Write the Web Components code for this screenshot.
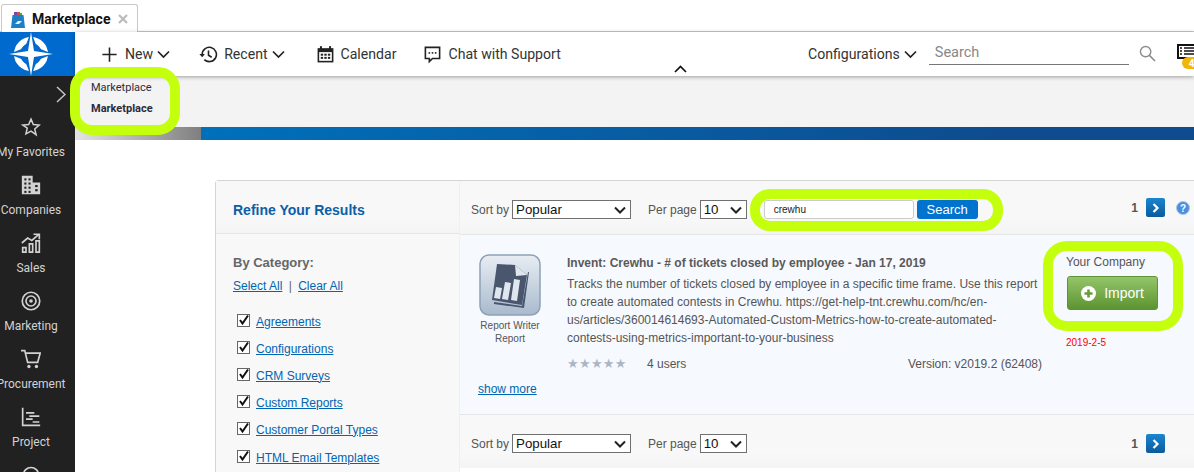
<!DOCTYPE html>
<html>
<head>
<meta charset="utf-8">
<title>Marketplace</title>
<style>
html, body { margin: 0; padding: 0; background: white; overflow: hidden; }
body { width: 1194px; height: 472px; font-family: 'Liberation Sans', Arial, sans-serif; }
</style>
</head>
<body>
<app-shell></app-shell>
<script>
const ICONS = {
    star: '<path d="M12 2.600l2.800 6.500 7 .6-5.300 4.600 1.600 6.900L12 17l-6.100 3.200 1.600-6.900L2.200 9.700l7-.6z" fill="none" stroke="currentColor" stroke-width="1.800"/>',
    companies: '<path d="M1 1h13v22H1zM14 9h9v14h-9z" fill="currentColor"/><g fill="#212121"><rect x="4" y="4" width="2.500" height="2.500"/><rect x="9" y="4" width="2.500" height="2.500"/><rect x="4" y="9" width="2.500" height="2.500"/><rect x="9" y="9" width="2.500" height="2.500"/><rect x="4" y="14" width="2.500" height="2.500"/><rect x="9" y="14" width="2.500" height="2.500"/><rect x="4" y="19" width="2.500" height="2.500"/><rect x="9" y="19" width="2.500" height="2.500"/><rect x="17" y="12" width="3" height="2.500"/><rect x="17" y="17" width="3" height="2.500"/></g>',
    sales: '<path d="M1 12l7-6 5 3 8-7M15 1.500h7v6" fill="none" stroke="currentColor" stroke-width="2"/><path d="M2 17.500h4v5.500H2zM10 13h4v10h-4zM18 9.500h4V23h-4z" fill="none" stroke="currentColor" stroke-width="2"/>',
    marketing: '<circle cx="12" cy="12" r="10.500" fill="none" stroke="currentColor" stroke-width="2"/><circle cx="12" cy="12" r="6" fill="none" stroke="currentColor" stroke-width="2"/><circle cx="12" cy="12" r="2.200" fill="currentColor"/>',
    cart: '<path d="M0 2h4.500l3.500 14h12L23 5H5.500" fill="none" stroke="currentColor" stroke-width="2"/><circle cx="9.500" cy="21" r="2" fill="currentColor"/><circle cx="18.500" cy="21" r="2" fill="currentColor"/>',
    project: '<path d="M2 1v21h21" fill="none" stroke="currentColor" stroke-width="2"/><path d="M6 7h10M10 11h12M6 14.500h8M14 18h8" fill="none" stroke="currentColor" stroke-width="2"/>',
    search: '<circle cx="12" cy="12" r="9" fill="none" stroke="currentColor" stroke-width="2"/><path d="M18 18l5 5" stroke="currentColor" stroke-width="2"/>',
    plus: '<path d="M12 3v18M3 12h18" stroke="currentColor" stroke-width="2" fill="none"/>',
    history: '<path d="M4 12a9 9 0 1 1 2.700 6.400" fill="none" stroke="currentColor" stroke-width="2"/><path d="M0.500 11.500h7L4 15.500z" fill="currentColor"/><path d="M12 7v6l4 2.500" fill="none" stroke="currentColor" stroke-width="2"/>',
    calendar: '<path d="M2 4h20v18H2z" fill="currentColor"/><rect x="5" y="1.500" width="2.500" height="4" fill="currentColor"/><rect x="16.500" y="1.500" width="2.500" height="4" fill="currentColor"/><rect x="4" y="9" width="16" height="11" fill="#fff"/><g fill="currentColor"><rect x="6" y="11" width="3" height="2.500"/><rect x="10.500" y="11" width="3" height="2.500"/><rect x="15" y="11" width="3" height="2.500"/><rect x="6" y="15" width="3" height="2.500"/><rect x="10.500" y="15" width="3" height="2.500"/><rect x="15" y="15" width="3" height="2.500"/></g>',
    chat: '<path d="M3 3h18v14H12l-4 4v-4H3z" fill="none" stroke="currentColor" stroke-width="2"/><g fill="currentColor"><rect x="7" y="9" width="2" height="2"/><rect x="11" y="9" width="2" height="2"/><rect x="15" y="9" width="2" height="2"/></g>'
};

function chevron(dir) {
    const d = dir === 'up' ? 'M1 7l5.500-5.500L12 7' : 'M1 1.500L6.500 7 12 1.500';
    return `<svg width="13" height="9" viewBox="0 0 13 9"><path d="${d}" fill="none" stroke="currentColor" stroke-width="1.700"/></svg>`;
}

class TabStrip extends HTMLElement {
    constructor() {
        super();
        this.attachShadow({ mode: 'open' }).innerHTML = `
            <style>
            :host { display: flex; height: 32px; box-sizing: border-box; border-bottom: 1px solid #c8c8c8; padding: 4px 0 0 1px; background: #fff; }
            .tab { display: flex; align-items: center; width: 137px; height: 28px; box-sizing: border-box; border: 1px solid #c8c8c8; border-bottom: 0; border-radius: 3px 3px 0 0; padding-left: 9px; background: #fff; }
            svg { display: block; }
            .bag { margin-top: 2px; }
            .label { font: bold 14px Roboto, sans-serif; color: #111; margin-left: 7px; }
            .x { margin-left: 8px; }
            </style>
            <div class="tab">
                <svg class="bag" width="14" height="16" viewBox="0 0 14 16">
                    <rect x="3" y="0" width="3" height="4" fill="#7a4aa0"/>
                    <rect x="6" y="0" width="3" height="4" fill="#d84a4a"/>
                    <rect x="9" y="1" width="2" height="3" fill="#3fae49"/>
                    <path d="M1.500 3h11L14 16H0z" fill="#1f7fc4"/>
                    <path d="M4 12l3-3 4 0-3 3z" fill="#e8f3fb"/>
                </svg>
                <span class="label">Marketplace</span>
                <svg class="x" width="10" height="10" viewBox="0 0 10 10"><path d="M1 1l8 8M9 1l-8 8" stroke="#bbb" stroke-width="2.200"/></svg>
            </div>
        `;
    }
}

class NavItem extends HTMLElement {
    constructor() {
        super();
        const icon = ICONS[this.getAttribute('icon')];
        this.attachShadow({ mode: 'open' }).innerHTML = `
            <style>
            :host { display: flex; flex-direction: column; align-items: center; height: 58px; width: 62px; color: #d2d2d2; }
            svg { display: block; width: 20px; height: 20px; flex: none; }
            .label { font: 12px/16px Roboto, sans-serif; margin-top: 7px; white-space: nowrap; }
            </style>
            <svg viewBox="0 0 24 24">${icon}</svg>
            <span class="label"><slot></slot></span>
        `;
    }
}

class SideNav extends HTMLElement {
    constructor() {
        super();
        this.attachShadow({ mode: 'open' }).innerHTML = `
            <style>
            :host { display: block; width: 75px; flex: none; background: #212121; overflow: hidden; }
            .logo { height: 44px; background: #006ace; padding-left: 9px; display: flex; align-items: center; }
            .toggle { height: 36px; display: flex; justify-content: flex-end; align-items: center; padding-right: 9px; }
            .list { display: flex; flex-direction: column; margin-top: 5px; }
            </style>
            <div class="logo">
                <svg width="44" height="44" viewBox="0 0 44 44">
                    <circle cx="22" cy="22" r="14" fill="none" stroke="#fff" stroke-width="6"/>
                    <path d="M22 8L26 18 36 22 26 26 22 36 18 26 8 22 18 18z" fill="#006ace" stroke="#006ace" stroke-width="6"/>
                    <path d="M22 0l3 19 19 3-19 3-3 19-3-19-19-3 19-3z" fill="#fff"/>
                </svg>
            </div>
            <div class="toggle">
                <svg width="10" height="17" viewBox="0 0 10 17"><path d="M1 1l8 7.500-8 7.500" fill="none" stroke="#c8c8c8" stroke-width="1.500"/></svg>
            </div>
            <div class="list"><slot></slot></div>
        `;
    }
}

class TopLink extends HTMLElement {
    constructor() {
        super();
        const name = this.getAttribute('icon');
        const icon = name ? `<svg class="ic" viewBox="0 0 24 24">${ICONS[name]}</svg>` : '';
        const caret = this.hasAttribute('caret') ? chevron('down') : '';
        this.attachShadow({ mode: 'open' }).innerHTML = `
            <style>
            :host { display: inline-flex; align-items: center; color: #333; font: 14.100px Roboto, sans-serif; white-space: nowrap; }
            .ic { width: 19px; height: 19px; margin-right: 6px; color: #222; display: block; }
            svg:not(.ic) { margin-left: 4px; color: #222; }
            </style>
            ${icon}<span><slot></slot></span>${caret}
        `;
    }
}

class TopBar extends HTMLElement {
    constructor() {
        super();
        this.attachShadow({ mode: 'open' }).innerHTML = `
            <style>
            :host { display: flex; align-items: center; height: 44px; flex: none; background: #fff; box-shadow: 0 1px 4px rgba(0,0,0,.35); position: relative; z-index: 1; padding-left: 25px; box-sizing: border-box; }
            .left { display: flex; gap: 28px; flex: 1; }
            .right { display: flex; align-items: center; position: relative; width: 386px; flex: none; }
            .search { width: 200px; height: 25px; flex: none; box-sizing: border-box; border-bottom: 1px solid #777; margin-left: 12px; padding-left: 6px; font: 14.500px/25px Roboto, sans-serif; color: #888; margin-top: -3px; }
            .mag { margin: -2px 0 0 10px; display: block; flex: none; }
            .up { position: absolute; left: 599px; top: 33px; color: #111; line-height: 0; }
            .tasks { position: relative; width: 30px; height: 30px; flex: none; margin-left: 21px; }
            .tasks svg { display: block; position: absolute; top: 5px; left: 0; }
            .dot { position: absolute; left: 5px; top: 18px; width: 22px; height: 12px; background: #f2b705; border-radius: 8px; font: bold 10px/13px Roboto, sans-serif; color: #fff; padding-left: 7px; box-sizing: border-box; }
            </style>
            <div class="left"><slot name="left"></slot></div>
            <div class="right">
                <slot name="right"></slot>
                <div class="search">Search</div>
                <svg class="mag" width="17" height="17" viewBox="0 0 18 18"><circle cx="7" cy="7" r="5.500" fill="none" stroke="#8c8c8c" stroke-width="1.500"/><path d="M11 11l6 6" stroke="#8c8c8c" stroke-width="1.700"/></svg>
                <div class="tasks">
                    <svg width="20" height="15" viewBox="0 0 20 15"><rect x="1" y="1" width="20" height="13" fill="#fff" stroke="#111" stroke-width="2"/><path d="M3 4h2M7 4h13M3 7h2M7 7h13M3 10h2M7 10h13" stroke="#111" stroke-width="1.500"/></svg>
                    <div class="dot">4</div>
                </div>
            </div>
            <div class="up">${chevron('up')}</div>
        `;
    }
}

class PageBanner extends HTMLElement {
    constructor() {
        super();
        this.attachShadow({ mode: 'open' }).innerHTML = `
            <style>
            :host { display: block; flex: none; }
            .crumbs { height: 51px; background: #f3f3f3; box-sizing: border-box; padding: 1px 0 0 16px; color: #2b2b3a; font: 11px/21px Roboto, sans-serif; }
            b { font-weight: bold; display: block; }
            span { display: block; }
            .bar { height: 13px; display: flex; }
            .grey { width: 126px; background: linear-gradient(90deg, #e4e4e4, #7f7f7f); }
            .blue { flex: 1; background: linear-gradient(90deg, #0070ba, #0e4c8f 80%); }
            </style>
            <div class="crumbs"><span>Marketplace</span><b>Marketplace</b></div>
            <div class="bar"><div class="grey"></div><div class="blue"></div></div>
        `;
    }
}

class SortBar extends HTMLElement {
    constructor() {
        super();
        this.attachShadow({ mode: 'open' }).innerHTML = `
            <style>
            :host { display: flex; align-items: center; height: 53px; box-sizing: border-box; padding: 4px 0 0 11px; background: linear-gradient(#f8f8f8 70%, #f4f4f4); color: #555; font: 12px 'Liberation Sans', Arial, sans-serif; white-space: nowrap; }
            .sel { display: inline-flex; align-items: center; justify-content: space-between; height: 19px; box-sizing: border-box; border: 1px solid #707070; background: #fff; color: #111; font: 13.300px 'Liberation Sans', Arial, sans-serif; padding: 0 4px 0 3px; margin-left: 3px; }
            .sort { width: 119px; }
            .per { width: 47px; }
            .gap { width: 17px; }
            .rest { flex: 1; display: flex; align-items: center; }
            </style>
            <span>Sort by</span><span class="sel sort">Popular${this.arrow()}</span>
            <span class="gap"></span>
            <span>Per page</span><span class="sel per">10${this.arrow()}</span>
            <div class="rest"><slot></slot></div>
        `;
    }
    arrow() {
        return '<svg width="12" height="8" viewBox="0 0 12 8"><path d="M1 1.500l5 5 5-5" fill="none" stroke="#222" stroke-width="2"/></svg>';
    }
}

class PagerControl extends HTMLElement {
    constructor() {
        super();
        const help = this.hasAttribute('help')
            ? `<svg class="help" viewBox="0 0 14 14"><circle cx="7" cy="7" r="6.500" fill="#4c8fdc" stroke="#a9c6e8"/><text x="7" y="10.500" text-anchor="middle" font-size="10" font-weight="bold" font-family="Liberation Sans" fill="#fff">?</text></svg>`
            : '<span style="width:25px"></span>';
        this.attachShadow({ mode: 'open' }).innerHTML = `
            <style>
            :host { display: flex; align-items: center; margin: 0 4px 0 auto; font: bold 12px 'Liberation Sans', Arial, sans-serif; color: #555; }
            :host([help]) { margin-top: -4px; }
            .next { width: 19px; height: 19px; border-radius: 2px; background: linear-gradient(#1a86cf, #0b5a9e); margin-left: 8px; display: flex; align-items: center; justify-content: center; }
            .help { margin-left: 11px; width: 14px; height: 14px; }
            </style>
            <span>1</span>
            <span class="next"><svg width="8" height="10" viewBox="0 0 8 10"><path d="M1.500 1l4 4-4 4" fill="none" stroke="#fff" stroke-width="2.200"/></svg></span>
            ${help}
        `;
    }
}

class ImportCard extends HTMLElement {
    constructor() {
        super();
        this.attachShadow({ mode: 'open' }).innerHTML = `
            <style>
            :host { display: grid; grid-template-columns: 107px 499px 1fr; height: 181px; box-sizing: border-box; background: #f6f9fe; border-top: 1px solid #e6e6e6; border-bottom: 1px solid #e6e6e6; color: #555; font: 12px/18px 'Liberation Sans', Arial, sans-serif; position: relative; }
            .type { padding-top: 19px; display: flex; flex-direction: column; align-items: center; width: 100px; font-size: 10px; line-height: 13px; text-align: center; color: #555; }
            .tile { width: 62px; height: 62px; margin-bottom: 3px; display: block; }
            .body { padding-top: 19px; }
            h4 { margin: 0 0 3px; font: bold 12px/18px 'Liberation Sans', Arial, sans-serif; color: #5a5a5a; }
            p { margin: 0; }
            .meta { display: flex; align-items: center; margin-top: 8px; position: relative; }
            .stars { color: #a9b6c6; font-size: 13px; letter-spacing: .3px; width: 80px; line-height: 18px; font-family: 'DejaVu Sans', sans-serif; white-space: nowrap; }
            .version { margin-left: auto; padding-right: 24px; }
            .more { position: absolute; left: 18px; bottom: 16px; color: #0065b3; text-decoration: underline; }
            .side { padding-top: 18px; }
            .btn { width: 91px; height: 34px; box-sizing: border-box; margin: 5px 0 0 1px; border-radius: 3px; border: 1px solid #5e9433; background: linear-gradient(#94c56a, #5c9430); color: #fff; font-size: 14px; display: flex; align-items: center; justify-content: center; gap: 8px; }
            .date { color: #f00; font-size: 10px; line-height: 12px; margin-top: 27px; }
            </style>
            <div class="type">
                <svg class="tile" viewBox="0 0 62 62">
                    <defs><linearGradient id="g" x1="0" y1="0" x2="0" y2="1"><stop offset="0" stop-color="#e8edf3"/><stop offset="1" stop-color="#a9bacd"/></linearGradient></defs>
                    <rect x="1" y="1" width="60" height="60" rx="9" fill="url(#g)" stroke="#8ea1b6" stroke-width="1.500"/>
                    <path d="M18 10l18 1 12 10-5 30-30-5z" fill="#49566e"/>
                    <path d="M36 11l1 11 11-1z" fill="#dfe6ee"/>
                    <path d="M50 18l-1 0-6 34-28-4 0 2 30 4z" fill="#49566e"/>
                    <path d="M17 33l6 1-2 11-6-1zM26 28l6 1-3 17-6-1zM35 25l6 1-3 21-6-1z" fill="#dfe6ee"/>
                </svg>
                Report Writer<br>Report
            </div>
            <div class="body">
                <h4>Invent: Crewhu - # of tickets closed by employee - Jan 17, 2019</h4>
                <p>Tracks the number of tickets closed by employee in a specific time frame. Use this report<br>to create automated contests in Crewhu. https://get-help-tnt.crewhu.com/hc/en-<br>us/articles/360014614693-Automated-Custom-Metrics-how-to-create-automated-<br>contests-using-metrics-important-to-your-business</p>
                <div class="meta"><span class="stars">★★★★★</span><span>4 users</span><span class="version">Version: v2019.2 (62408)</span></div>
            </div>
            <a class="more">show more</a>
            <div class="side">
                Your Company
                <div class="btn">
                    <svg width="15" height="15" viewBox="0 0 15 15"><circle cx="7.500" cy="7.500" r="7.500" fill="#fff"/><path d="M7.500 3.500v8M3.500 7.500h8" stroke="#679c3a" stroke-width="2.600"/></svg>
                    Import
                </div>
                <div class="date">2019-2-5</div>
            </div>
        `;
    }
}

class CategoryItem extends HTMLElement {
    constructor() {
        super();
        this.attachShadow({ mode: 'open' }).innerHTML = `
            <style>
            :host { display: flex; align-items: center; height: 27px; font: 12px 'Liberation Sans', Arial, sans-serif; }
            .box { width: 13px; height: 13px; box-sizing: border-box; border: 1px solid #666; background: #fff; margin: 0 6px 0 4px; position: relative; top: -1px; overflow: visible; flex: none; }
            a { color: #0065b3; text-decoration: underline; }
            </style>
            <svg class="box" viewBox="0 0 11 11"><path d="M2 5l2.500 3.500 5.500-8" fill="none" stroke="#111" stroke-width="2"/></svg>
            <a><slot></slot></a>
        `;
    }
}

class RefinePanel extends HTMLElement {
    constructor() {
        super();
        this.attachShadow({ mode: 'open' }).innerHTML = `
            <style>
            :host { display: block; width: 244px; flex: none; background: #f8f8f8; color: #555; font: 12px 'Liberation Sans', Arial, sans-serif; border-right: 1px solid #f0f0f0; box-sizing: border-box; }
            .head { height: 53px; box-sizing: border-box; border-bottom: 1px solid #e6e6e6; padding: 6px 0 0 17px; display: flex; align-items: center; font: bold 14px 'Liberation Sans', Arial, sans-serif; color: #0b5fa8; background: linear-gradient(#f8f8f8 70%, #f4f4f4); }
            .body { padding: 20px 0 0 17px; }
            h5 { margin: 0; font: bold 13px/18px 'Liberation Sans', Arial, sans-serif; color: #666; }
            .links { margin: 6px 0 14px; line-height: 16px; white-space: nowrap; }
            a { color: #0065b3; text-decoration: underline; }
            .sep { margin: 0 3px; color: #666; }
            </style>
            <div class="head">Refine Your Results</div>
            <div class="body">
                <h5>By Category:</h5>
                <div class="links"><a>Select All</a><span class="sep"> | </span><a>Clear All</a></div>
                <slot></slot>
            </div>
        `;
    }
}

class AppShell extends HTMLElement {
    constructor() {
        super();
        this.attachShadow({ mode: 'open' }).innerHTML = `
            <style>
            :host { display: flex; flex-direction: column; width: 1194px; height: 472px; overflow: hidden; position: relative; }
            .main { display: flex; flex: 1; min-height: 0; }
            .page { flex: 1; display: flex; flex-direction: column; min-width: 0; }
            .content { flex: 1; padding: 40px 0 0 140px; min-height: 0; }
            .panel { display: flex; width: 979px; height: 100%; box-sizing: border-box; border: 1px solid #d4d4d4; border-right: 0; border-bottom: 0; border-radius: 4px 0 0 0; }
            .results { flex: 1; min-width: 0; display: flex; flex-direction: column; }
            .searchbox { display: flex; align-items: center; margin-left: 17px; }
            .field { width: 150px; height: 19px; box-sizing: border-box; border: 1px solid #ccc; border-radius: 3px; background: #fff; font: 10px/17px 'Liberation Sans', Arial, sans-serif; color: #222; padding-left: 9px; }
            .go { width: 61px; height: 19px; margin-left: 3px; background: #0073cf; color: #fff; border-radius: 3px; font: 13px/19px 'Liberation Sans', Arial, sans-serif; text-align: center; }
            .ring { position: absolute; border: 10px solid #c4ff0e; box-sizing: border-box; background: transparent; pointer-events: none; z-index: 5; }
            </style>
            <tab-strip></tab-strip>
            <div class="main">
                <side-nav>
                    <nav-item icon="star">My Favorites</nav-item>
                    <nav-item icon="companies">Companies</nav-item>
                    <nav-item icon="sales">Sales</nav-item>
                    <nav-item icon="marketing">Marketing</nav-item>
                    <nav-item icon="cart">Procurement</nav-item>
                    <nav-item icon="project">Project</nav-item>
                    <nav-item icon="search"></nav-item>
                </side-nav>
                <div class="page">
                    <top-bar>
                        <top-link slot="left" icon="plus" caret>New</top-link>
                        <top-link slot="left" icon="history" caret style="margin-left:1px">Recent</top-link>
                        <top-link slot="left" icon="calendar" style="margin-left:3px">Calendar</top-link>
                        <top-link slot="left" icon="chat" style="margin-left:-1px">Chat with Support</top-link>
                        <top-link slot="right" caret>Configurations</top-link>
                    </top-bar>
                    <page-banner></page-banner>
                    <div class="content">
                        <div class="panel">
                            <refine-panel>
                                <category-item>Agreements</category-item>
                                <category-item>Configurations</category-item>
                                <category-item>CRM Surveys</category-item>
                                <category-item>Custom Reports</category-item>
                                <category-item>Customer Portal Types</category-item>
                                <category-item style="margin-top:1px">HTML Email Templates</category-item>
                            </refine-panel>
                            <div class="results">
                                <sort-bar>
                                    <div class="searchbox"><div class="field">crewhu</div><div class="go">Search</div></div>
                                    <pager-control help></pager-control>
                                </sort-bar>
                                <import-card></import-card>
                                <sort-bar><pager-control></pager-control></sort-bar>
                            </div>
                        </div>
                    </div>
                </div>
            </div>
            <div class="ring" style="left:70px;top:67px;width:110px;height:68px;border-radius:22px"></div>
            <div class="ring" style="left:750px;top:189px;width:253px;height:42px;border-radius:20px"></div>
            <div class="ring" style="left:1043px;top:241px;width:140px;height:90px;border-radius:24px"></div>
        `;
    }
}

customElements.define('tab-strip', TabStrip);
customElements.define('nav-item', NavItem);
customElements.define('side-nav', SideNav);
customElements.define('top-link', TopLink);
customElements.define('top-bar', TopBar);
customElements.define('page-banner', PageBanner);
customElements.define('sort-bar', SortBar);
customElements.define('pager-control', PagerControl);
customElements.define('import-card', ImportCard);
customElements.define('category-item', CategoryItem);
customElements.define('refine-panel', RefinePanel);
customElements.define('app-shell', AppShell);
</script>
</body>
</html>
